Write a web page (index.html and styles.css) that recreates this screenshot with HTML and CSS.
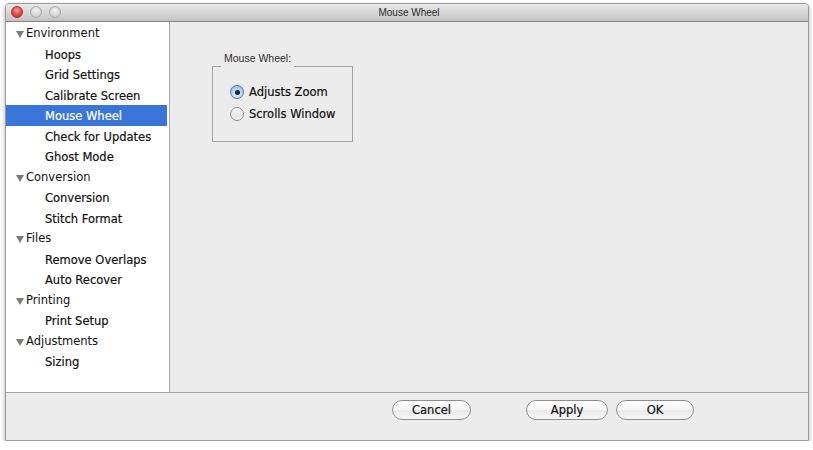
FILE: index.html
```html
<!DOCTYPE html>
<html>
<head>
<meta charset="utf-8">
<title>Mouse Wheel</title>
<link rel="stylesheet" href="styles.css">
</head>
<body>
<div class="window">
  <div class="titlebar">
    <div class="lights">
      <span class="light red"></span>
      <span class="light"></span>
      <span class="light"></span>
    </div>
    <div class="title">Mouse Wheel</div>
  </div>
  <div class="main">
    <ul class="sidebar">
      <li class="row group"><span class="tri"></span>Environment</li>
      <li class="row item">Hoops</li>
      <li class="row item">Grid Settings</li>
      <li class="row item">Calibrate Screen</li>
      <li class="row item selected">Mouse Wheel</li>
      <li class="row item">Check for Updates</li>
      <li class="row item">Ghost Mode</li>
      <li class="row group"><span class="tri"></span>Conversion</li>
      <li class="row item">Conversion</li>
      <li class="row item">Stitch Format</li>
      <li class="row group"><span class="tri"></span>Files</li>
      <li class="row item">Remove Overlaps</li>
      <li class="row item">Auto Recover</li>
      <li class="row group"><span class="tri"></span>Printing</li>
      <li class="row item">Print Setup</li>
      <li class="row group"><span class="tri"></span>Adjustments</li>
      <li class="row item">Sizing</li>
    </ul>
    <div class="pane">
      <div class="groupbox">
        <div class="legend">Mouse Wheel:</div>
        <div class="radio-row"><span class="radio on"></span><span class="radio-label">Adjusts Zoom</span></div>
        <div class="radio-row"><span class="radio"></span><span class="radio-label">Scrolls Window</span></div>
      </div>
    </div>
  </div>
  <div class="footer">
    <button class="btn btn-cancel">Cancel</button>
    <button class="btn btn-apply">Apply</button>
    <button class="btn btn-ok">OK</button>
  </div>
</div>
</body>
</html>
```

FILE: styles.css
```css
* { box-sizing: border-box; }
html, body { margin: 0; padding: 0; background: #ffffff; }
body { font-family: "DejaVu Sans", "Liberation Sans", sans-serif; font-size: 11.5px; color: #1a1a1a; }

.window {
  margin: 3px 0 0 5px;
  width: 804px;
  height: 438px;
  border: 1px solid #9c9c9c;
  border-radius: 4px 4px 0 0;
  background: #ececec;
  box-shadow: 0 2px 4px rgba(0,0,0,0.35);
  display: flex;
  flex-direction: column;
  overflow: hidden;
}

.titlebar {
  height: 18px;
  flex: none;
  position: relative;
  background: linear-gradient(#e9e9e9, #d3d3d3 60%, #c2c2c2);
  border-bottom: 1px solid #858585;
  display: flex;
  align-items: center;
  justify-content: center;
}
.lights {
  position: absolute;
  left: 5px;
  top: 2px;
  display: flex;
  gap: 7px;
}
.light {
  width: 12px;
  height: 12px;
  border-radius: 50%;
  background: radial-gradient(circle at 50% 35%, #f4f4f4, #d6d6d6 60%, #bcbcbc);
  border: 1px solid #a9a9a9;
}
.light.red {
  background: radial-gradient(circle at 50% 35%, #f7a19b, #e3463f 55%, #b52b24);
  border-color: #a8352f;
}
.title {
  font-family: "Liberation Sans", "DejaVu Sans", sans-serif;
  font-size: 10px;
  color: #2a2a2a;
  line-height: 14px;
  margin-left: 4px;
}

.main {
  flex: none;
  height: 370px;
  display: flex;
}

.sidebar {
  list-style: none;
  margin: 0;
  padding: 1px 2px 0 0;
  width: 164px;
  flex: none;
  background: #ffffff;
  border-right: 1px solid #a9a9a9;
}
.row {
  height: 20.5px;
  line-height: 22.5px;
  white-space: nowrap;
  color: #111;
}
.group {
  padding-left: 10px;
  display: flex;
  align-items: center;
}
.tri {
  width: 0;
  height: 0;
  border-left: 4.5px solid transparent;
  border-right: 4.5px solid transparent;
  border-top: 7px solid #7a7a7a;
  margin-right: 2px;
  margin-top: 3px;
}
.item {
  padding-left: 39px;
  -webkit-text-stroke: 0.2px #111;
}
.item.selected {
  background: #3a76d7;
  color: #ffffff;
  -webkit-text-stroke: 0.2px #ffffff;
}

.pane {
  flex: 1;
  padding: 44px 0 0 42px;
  background: #ececec;
}
.groupbox {
  position: relative;
  width: 141px;
  height: 76px;
  border: 1px solid #a3a3a3;
  padding: 14px 0 0 17px;
}
.legend {
  position: absolute;
  left: 8px;
  top: -15px;
  height: 16px;
  line-height: 13px;
  padding: 0 3px;
  background: #ececec;
  font-family: "Liberation Sans", "DejaVu Sans", sans-serif;
  font-size: 10.5px;
  color: #2c2c2c;
}
.radio-row {
  height: 22px;
  display: flex;
  align-items: center;
}
.radio {
  width: 14px;
  height: 14px;
  border-radius: 50%;
  border: 1px solid #8e8e8e;
  background: linear-gradient(#fbfbfb, #e6e6e6 55%, #f2f2f2);
  margin-right: 5px;
  display: flex;
  align-items: center;
  justify-content: center;
  flex: none;
}
.radio.on {
  border-color: #5277ad;
  background: radial-gradient(circle at 50% 70%, #e3f0fd, #a9cdf2 60%, #7aa9de);
}
.radio.on::after {
  content: "";
  width: 5px;
  height: 5px;
  border-radius: 50%;
  background: #1b2433;
}
.radio-label {
  -webkit-text-stroke: 0.2px #111;
  color: #111;
}

.footer {
  flex: 1;
  border-top: 1px solid #a4a4a4;
  background: #ececec;
  padding: 7px 0 0 386px;
  display: flex;
  align-items: flex-start;
}
.btn {
  height: 20px;
  border: 1px solid #8e8e8e;
  border-radius: 10px;
  background: linear-gradient(#ffffff, #f4f4f4 50%, #e9e9e9 52%, #f6f6f6);
  font-family: "DejaVu Sans", "Liberation Sans", sans-serif;
  font-size: 11.5px;
  color: #111;
  -webkit-text-stroke: 0.2px #111;
  padding: 1px 0 0 0;
  line-height: 17px;
}
.btn-cancel { width: 79px; }
.btn-apply { width: 82px; margin-left: 55px; }
.btn-ok { width: 78px; margin-left: 8px; }
```
